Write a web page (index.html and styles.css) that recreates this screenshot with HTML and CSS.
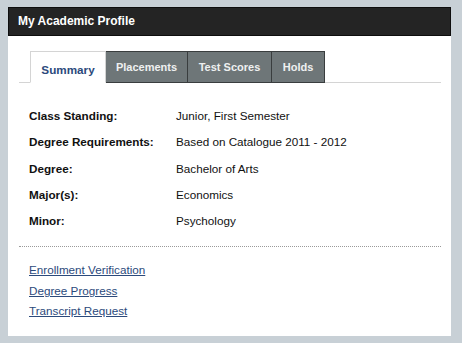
FILE: index.html
```html
<!DOCTYPE html>
<html lang="en">
<head>
    <meta charset="UTF-8">
    <meta name="viewport" content="width=device-width, initial-scale=1.0">
    <title>My Academic Profile</title>
    <link rel="stylesheet" href="styles.css">
</head>
<body>
    <div class="panel">
        <div class="panel-header">My Academic Profile</div>
        <div class="panel-body">
            <ul class="tabs">
                <li class="tab active">Summary</li>
                <li class="tab">Placements</li>
                <li class="tab">Test Scores</li>
                <li class="tab">Holds</li>
            </ul>
            <div class="details">
                <div class="row"><span class="label">Class Standing:</span><span class="value">Junior, First Semester</span></div>
                <div class="row"><span class="label">Degree Requirements:</span><span class="value">Based on Catalogue 2011 - 2012</span></div>
                <div class="row"><span class="label">Degree:</span><span class="value">Bachelor of Arts</span></div>
                <div class="row"><span class="label">Major(s):</span><span class="value">Economics</span></div>
                <div class="row"><span class="label">Minor:</span><span class="value">Psychology</span></div>
            </div>
            <div class="links">
                <a href="#">Enrollment Verification</a>
                <a href="#">Degree Progress</a>
                <a href="#">Transcript Request</a>
            </div>
        </div>
    </div>
</body>
</html>
```

FILE: styles.css
```css
body {
    font-family: "Liberation Sans", Arial, sans-serif;
    font-size: 11.7px;
    margin: 0;
    padding: 7px 10px 7px 8px;
    background-color: #c8d0d6;
    color: #111;
}
.panel {
    width: 443px;
    height: 329px;
    background-color: #fff;
    box-sizing: border-box;
}
.panel-header {
    height: 29px;
    box-sizing: border-box;
    background-color: #242424;
    border: 1px solid #0e0e0e;
    color: #fff;
    font-size: 12px;
    font-weight: bold;
    line-height: 27px;
    padding-left: 9px;
}
.panel-body {
    padding: 15px 10px 0 11px;
}
.tabs {
    list-style: none;
    margin: 0;
    padding: 0 0 0 11px;
    display: flex;
    border-bottom: 1px solid #d4d4d4;
}
.tab {
    height: 32px;
    box-sizing: border-box;
    line-height: 31px;
    text-align: center;
    font-size: 11px;
    font-weight: bold;
    color: #eef0f0;
    background-color: #6e7678;
    border: 1px solid #393d3e;
    border-left: none;
    margin-bottom: -1px;
}
.tab:nth-child(2) { width: 82px; }
.tab:nth-child(3) { width: 84px; }
.tab:nth-child(4) { width: 53px; }
.tab.active {
    width: 76px;
    font-size: 11.7px;
    background-color: #fff;
    color: #2c4a7c;
    border: 1px solid #d4d4d4;
    border-bottom-color: #fff;
    line-height: 36px;
}
.details {
    padding: 20px 0 0 10px;
}
.row {
    display: flex;
    line-height: 26.3px;
}
.label {
    width: 147px;
    font-weight: bold;
}
.links {
    margin-top: 11.5px;
    border-top: 1px dotted #9a9a9a;
    padding: 13.5px 0 0 10px;
    display: flex;
    flex-direction: column;
    align-items: flex-start;
}
.links a {
    color: #2c4a7c;
    line-height: 20.5px;
}
```
